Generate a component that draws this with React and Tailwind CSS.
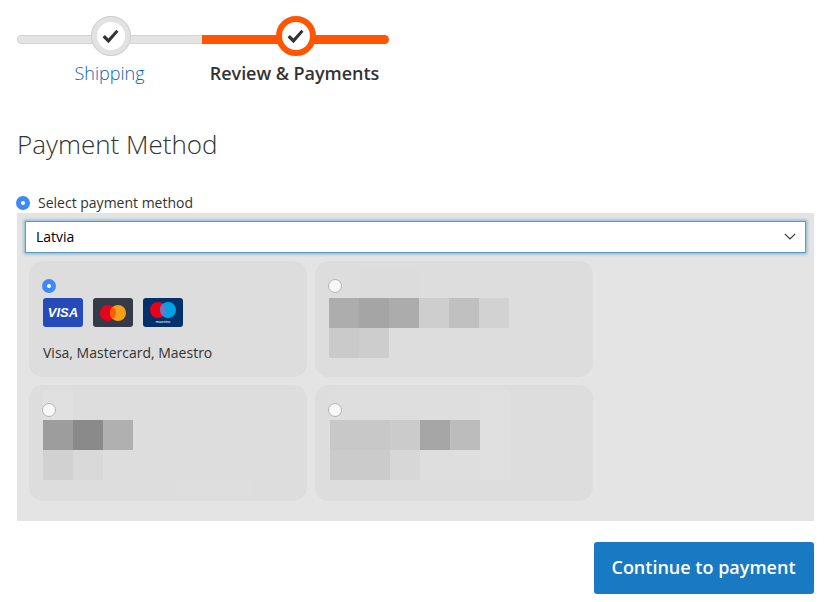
import React from "react";

const STEPS = [
    { label: "Shipping", width: "w-[185px]", done: true },
    { label: "Review & Payments", width: "w-[187px]", done: false },
];

const CARDS = [
    {
        id: "card-2", pad: "pt-[7px] pl-[14px]", radioPos: "top-[18px] left-[13px]",
        rows: [
            ["transparent", "#dcdcdc", "#dcdcdc"],
            ["#adadad", "#a5a5a5", "#acacac", "#cecece", "#c0c0c0", "#d2d2d2"],
            ["#cacaca", "#cdcdcd"],
        ],
    },
    {
        id: "card-3", pad: "pt-[5px] pl-[14px]", radioPos: "top-[18px] left-[13px]", smudge: true,
        rows: [
            ["#e0e0e0"],
            ["#9d9d9d", "#8a8a8a", "#b0b0b0"],
            ["#d1d1d1", "#d9d9d9"],
        ],
    },
    {
        id: "card-4", pad: "pt-[5px] pl-[15px]", radioPos: "top-[18px] left-[13px]",
        rows: [
            ["#dedede", "#dedede", "#dedede", "#dedede", "#dedede", "#e0e0e0"],
            ["#c8c8c8", "#c8c8c8", "#cbcbcb", "#a6a6a6", "#bcbcbc", "#e0e0e0"],
            ["#cbcbcb", "#cbcbcb", "#d7d7d7", "#dedede", "#dedede", "#e0e0e0"],
        ],
    },
];

function Check() {
    return (
        <svg width="17" height="15" viewBox="0 0 18 16" fill="#333">
            <polygon points="0.5,8.8 3,6.4 6.8,10 15.2,0.8 17.5,3 6.9,15.2" />
        </svg>
    );
}

function Radio({ checked, className = "" }) {
    if (checked) {
        return (
            <span className={`flex h-[14px] w-[14px] items-center justify-center rounded-full bg-[#3f88f8] ${className}`}>
                <span className="h-[4px] w-[4px] rounded-full bg-white" />
            </span>
        );
    }
    return <span className={`block h-[14px] w-[14px] rounded-full border border-[#b5b5b5] bg-[#f8f8f8] ${className}`} />;
}

function Step({ step }) {
    return (
        <div className={`relative ${step.width}`}>
            <div className={`h-[9px] ${step.done ? "rounded-l-full border border-r-0 border-[#d4d4d4] bg-[#e4e4e4]" : "rounded-r-full bg-[#ff5501]"}`} />
            <div
                className={`absolute left-1/2 top-[-19px] flex h-[40px] w-[40px] -translate-x-1/2 items-center justify-center rounded-full bg-white ${
                    step.done ? "ml-[1px] border-[6px] border-[#e2e2e2] outline outline-1 -outline-offset-1 outline-[#cfcfcf]" : "border-[6px] border-[#ff5501]"
                }`}
            >
                <Check />
            </div>
            <div className={`mt-[17px] text-center text-[18px] leading-[24px] ${step.done ? "font-light text-[#0a66b0]" : "pr-[2px] font-semibold tracking-[-0.05px] text-[#333]"}`}>
                {step.label}
            </div>
        </div>
    );
}

function CardIcons() {
    return (
        <div className="mt-[5px] flex gap-[10px]">
            <div className="flex h-[29px] w-[40px] items-center justify-center rounded-[3px] bg-[#254aba] font-['Liberation_Sans',sans-serif] text-[13px] font-bold italic text-white">
                VISA
            </div>
            <div className="flex h-[29px] w-[40px] items-center justify-center rounded-[3px] bg-[#343a48]">
                <svg width="26" height="16" viewBox="0 0 26 16">
                    <circle cx="8" cy="8" r="8" fill="#eb001b" />
                    <circle cx="18" cy="8" r="8" fill="#f79e1b" />
                    <path d="M13 1.8a8 8 0 0 1 0 12.4a8 8 0 0 1 0-12.4z" fill="#ff5f00" />
                </svg>
            </div>
            <div className="flex h-[29px] w-[40px] items-center justify-center rounded-[3px] bg-[#03326b]">
                <svg width="32" height="25" viewBox="0 0 32 25">
                    <circle cx="11" cy="10" r="8" fill="#eb001b" />
                    <circle cx="21" cy="10" r="8" fill="#00a2e5" />
                    <path d="M16 3.8a8 8 0 0 1 0 12.4a8 8 0 0 1 0-12.4z" fill="#7673c0" />
                    <text x="16" y="23" textAnchor="middle" fontSize="4" fill="#fff" fontFamily="Liberation Sans, sans-serif">maestro</text>
                </svg>
            </div>
        </div>
    );
}

function BlurCard({ card }) {
    return (
        <div className={`relative h-[116px] w-[278px] rounded-[14px] bg-[#dddddd] ${card.pad}`}>
            {card.rows.map((row, i) => (
                <div key={i} className="flex">
                    {row.map((c, j) => (
                        <div key={j} className="h-[30px] w-[30px]" style={{ backgroundColor: c }} />
                    ))}
                </div>
            ))}
            {card.smudge && <div className="absolute left-[147px] top-[95px] h-[17px] w-[76px] bg-[#dedede]" />}
            <Radio className={`absolute ${card.radioPos}`} />
        </div>
    );
}

export default function App() {
    return (
        <div className="h-[602px] w-[830px] overflow-hidden bg-white pl-[17px] pr-[16px] pt-[35px] font-['Open_Sans',sans-serif] text-[#333]">
            <div className="flex">
                {STEPS.map((s) => <Step key={s.label} step={s} />)}
            </div>

            <h1 className="mt-[41px] text-[26px] font-light leading-[36px] text-[#333]">Payment Method</h1>

            <label className="-ml-[1px] mt-[32px] flex h-[18px] items-center gap-[8px] text-[14px] leading-[18px]">
                <Radio checked />
                <span>Select payment method</span>
            </label>

            <div className="mt-[1px] h-[308px] bg-[#e4e4e4] px-[8px] pt-[8px]">
                <div className="flex h-[32px] items-center justify-between border border-[#5a9cbf] bg-white pb-[1px] pl-[10px] pr-[9px] text-[14px] text-black shadow-[0_0_3px_1px_#7fb2d2]">
                    <span>Latvia</span>
                    <svg width="12" height="7" viewBox="0 0 12 7" fill="none" stroke="#333" strokeWidth="1.2">
                        <path d="M0.8 0.8 6 6 11.2 0.8" />
                    </svg>
                </div>
                <div className="mt-[8px] grid w-[564px] translate-x-[4px] grid-cols-[278px_278px] gap-[8px]">
                    <div className="h-[116px] rounded-[14px] bg-[#dddddd] pl-[14px] pt-[18px]">
                        <Radio checked className="-translate-x-[1px]" />
                        <CardIcons />
                        <div className="mt-[17px] text-[14px] leading-[18px] text-[#333]">Visa, Mastercard, Maestro</div>
                    </div>
                    {CARDS.map((c) => <BlurCard key={c.id} card={c} />)}
                </div>
            </div>

            <div className="mt-[21px] flex justify-end">
                <button className="h-[52px] w-[220px] rounded-[3px] bg-[#1979c3] pb-[2px] pr-[1px] text-[18px] font-semibold text-white">
                    Continue to payment
                </button>
            </div>
        </div>
    );
}
